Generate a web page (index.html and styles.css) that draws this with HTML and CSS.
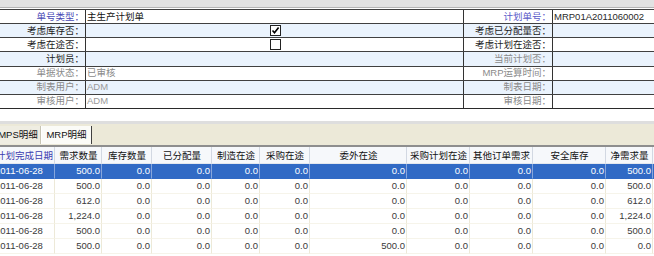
FILE: index.html
```html
<!DOCTYPE html>
<html>
<head>
<meta charset="utf-8">
<link rel="stylesheet" href="styles.css">
</head>
<body>
<div class="topbar"></div>
<div class="form">
  <div class="row">
    <div class="lbl blue">单号类型：</div><div class="val">主生产计划单</div>
    <div class="lbl blue2">计划单号：</div><div class="val dark">MRP01A2011060002</div>
  </div>
  <div class="row alt">
    <div class="lbl">考虑库存否：</div><div class="val center"><span class="chk on"><svg width="9" height="9" viewBox="0 0 9 9"><path d="M1.5 4.5 L3.5 6.8 L7.6 1.6" fill="none" stroke="#000" stroke-width="1.6"/></svg></span></div>
    <div class="lbl">考虑已分配量否：</div><div class="val"></div>
  </div>
  <div class="row">
    <div class="lbl">考虑在途否：</div><div class="val center"><span class="chk"></span></div>
    <div class="lbl">考虑计划在途否：</div><div class="val"></div>
  </div>
  <div class="row alt">
    <div class="lbl">计划员：</div><div class="val"></div>
    <div class="lbl gray">当前计划否：</div><div class="val"></div>
  </div>
  <div class="row">
    <div class="lbl gray">单据状态：</div><div class="val gray">已审核</div>
    <div class="lbl gray">MRP运算时间：</div><div class="val"></div>
  </div>
  <div class="row alt">
    <div class="lbl gray">制表用户：</div><div class="val light">ADM</div>
    <div class="lbl gray">制表日期：</div><div class="val"></div>
  </div>
  <div class="row last">
    <div class="lbl gray">审核用户：</div><div class="val light">ADM</div>
    <div class="lbl gray">审核日期：</div><div class="val"></div>
  </div>
</div>
<div class="gap"></div>
<div class="tabstrip">
  <div class="tabs">
    <div class="tab">MPS明细</div>
    <div class="tab active">MRP明细</div>
  </div>
</div>
<div class="gridwrap">
  <table class="grid">
    <colgroup>
      <col style="width:61px"><col style="width:47px"><col style="width:50px"><col style="width:60px"><col style="width:48px"><col style="width:50px"><col style="width:97px"><col style="width:63px"><col style="width:63px"><col style="width:73px"><col style="width:47px"><col style="width:60px">
    </colgroup>
    <thead>
      <tr><th class="first">计划完成日期</th><th>需求数量</th><th>库存数量</th><th>已分配量</th><th>制造在途</th><th>采购在途</th><th>委外在途</th><th>采购计划在途</th><th>其他订单需求</th><th>安全库存</th><th>净需求量</th><th></th></tr>
    </thead>
    <tbody>
      <tr class="sel"><td class="date">2011-06-28</td><td>500.0</td><td>0.0</td><td>0.0</td><td>0.0</td><td>0.0</td><td>0.0</td><td>0.0</td><td>0.0</td><td>0.0</td><td>500.0</td><td></td></tr>
      <tr><td class="date">2011-06-28</td><td>500.0</td><td>0.0</td><td>0.0</td><td>0.0</td><td>0.0</td><td>0.0</td><td>0.0</td><td>0.0</td><td>0.0</td><td>500.0</td><td></td></tr>
      <tr><td class="date">2011-06-28</td><td>612.0</td><td>0.0</td><td>0.0</td><td>0.0</td><td>0.0</td><td>0.0</td><td>0.0</td><td>0.0</td><td>0.0</td><td>612.0</td><td></td></tr>
      <tr><td class="date">2011-06-28</td><td>1,224.0</td><td>0.0</td><td>0.0</td><td>0.0</td><td>0.0</td><td>0.0</td><td>0.0</td><td>0.0</td><td>0.0</td><td>1,224.0</td><td></td></tr>
      <tr><td class="date">2011-06-28</td><td>500.0</td><td>0.0</td><td>0.0</td><td>0.0</td><td>0.0</td><td>0.0</td><td>0.0</td><td>0.0</td><td>0.0</td><td>500.0</td><td></td></tr>
      <tr><td class="date">2011-06-28</td><td>500.0</td><td>0.0</td><td>0.0</td><td>0.0</td><td>0.0</td><td>500.0</td><td>0.0</td><td>0.0</td><td>0.0</td><td>0.0</td><td></td></tr>
    </tbody>
  </table>
</div>
</body>
</html>
```
FILE: styles.css
```css
html, body {
  margin: 0;
  padding: 0;
  background: #ffffff;
  overflow: hidden;
}
body {
  width: 654px;
  height: 256px;
  font-family: "Liberation Sans", "Noto Sans CJK SC", sans-serif;
  font-size: 9.5px;
  color: #111;
}
.topbar {
  height: 7px;
  background: #e2e2e2;
  border-bottom: 1px solid #b4b4b4;
  margin-bottom: 1px;
}
.form {
  border-top: 1px solid #404040;
}
.row {
  display: grid;
  grid-template-columns: 86px 378px 89px 1fr;
  height: 14.15px;
  box-sizing: border-box;
  border-bottom: 1px solid #404040;
  background: #ffffff;
}
.row.alt {
  background: #eaf3fd;
}
.row.last {
  border-bottom: 1px solid #2a2a2a;
}
.lbl, .val {
  display: flex;
  align-items: center;
  line-height: 12px;
  white-space: nowrap;
  overflow: hidden;
}
.lbl {
  justify-content: flex-end;
  padding-right: 1px;
  border-right: 1px solid #333333;
  color: #1a1a1a;
}
.val {
  padding-left: 1px;
}
.val:nth-child(2) {
  border-right: 1px solid #333333;
}
.val.center {
  justify-content: center;
}
.blue { color: #4848b4; }
.blue2 { color: #5a5ac8; }
.gray { color: #8a8a8a; }
.light { color: #9a9a9a; }
.dark { color: #2a2a2a; }
.chk {
  width: 11px;
  height: 11px;
  box-sizing: border-box;
  border: 1px solid #222;
  background: #ffffff;
  display: flex;
  align-items: center;
  justify-content: center;
}
.gap {
  height: 12px;
  border-bottom: 3px solid #dedede;
}
.tabstrip {
  background: #ece9d8;
  border-bottom: 2px solid #8e8e8e;
  box-sizing: border-box;
  height: 23px;
  overflow: hidden;
}
.tabs {
  display: flex;
  margin-left: -4px;
  padding-top: 2px;
}
.tab {
  height: 18px;
  line-height: 18px;
  box-sizing: border-box;
  text-align: center;
  color: #111;
  border-right: 1px solid #c8c5b4;
}
.tab:first-child {
  width: 45px;
  background: #efede2;
}
.tab.active {
  width: 51px;
  background: #fbfbf7;
  border-left: 1px solid #ffffff;
  border-right: 1px solid #404040;
}
.gridwrap {
  overflow: hidden;
  width: 654px;
  height: 109px;
}
.grid {
  margin-left: -6px;
  table-layout: fixed;
  border-collapse: separate;
  border-spacing: 0;
  width: 719px;
}
.grid th, .grid td {
  box-sizing: border-box;
  padding: 0 1px 0 2px;
  white-space: nowrap;
  overflow: hidden;
}
.grid th {
  height: 17px;
  font-weight: normal;
  text-align: center;
  color: #111;
  background: #f6f8fb;
  border-right: 1px solid #d2d8e2;
  border-bottom: 1px solid #e4e8ee;
}
.grid th.first {
  color: #3c3cb0;
}
.grid td {
  height: 15px;
  text-align: right;
  color: #3a3a3a;
  border-right: 1px solid #ede9d8;
  border-bottom: 1px solid #f6f4ea;
}
.grid td.date {
  text-align: left;
  padding-left: 1px;
}
.grid tr.sel td {
  background: #316ac5;
  color: #ffffff;
  border-right: 1px solid #86a6dc;
  border-bottom: 1px solid #316ac5;
}
```
